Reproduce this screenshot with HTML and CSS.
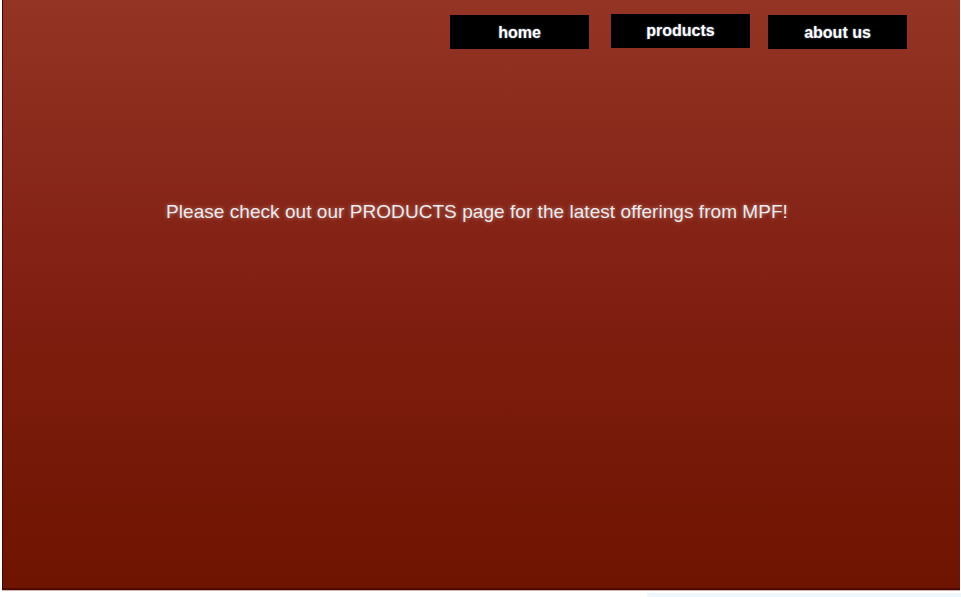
FILE: index.html
```html
<!DOCTYPE html>
<html lang="en">
<head>
    <meta charset="UTF-8">
    <title>MPF</title>
    <link rel="stylesheet" href="styles.css">
</head>
<body>
    <div class="page">
        <div class="nav">
            <a class="nav-btn" href="#">home</a>
            <a class="nav-btn nav-up" href="#">products</a>
            <a class="nav-btn" href="#">about us</a>
        </div>
        <p class="message">Please check out our PRODUCTS page for the latest offerings from MPF!</p>
    </div>
    <div class="footer-strip"></div>
</body>
</html>
```

FILE: styles.css
```css
body {
    margin: 0;
    background: #fff;
    font-family: "Liberation Sans", Arial, sans-serif;
}

/* Main panel */
.page {
    margin-left: 2px;
    width: 957px;
    height: 588px;
    background: linear-gradient(to bottom, #933425 0%, #801f12 50%, #6f1400 100%);
    border-left: 1px solid #3a0a04;
    border-bottom: 2px solid #4a0a00;
    box-shadow: 0 1px 0 #d8b0a8;
    display: flex;
    flex-direction: column;
}

.nav {
    display: flex;
    align-items: flex-start;
    gap: 22px;
    padding: 15px 0 0 447px;
}

.nav-btn {
    width: 139px;
    height: 34px;
    line-height: 35px;
    background: #000;
    color: #fff;
    text-align: center;
    font-size: 16px;
    font-weight: bold;
    text-decoration: none;
    text-shadow: 0 0 2px rgba(200, 220, 255, 0.6);
}

.nav-up {
    margin-top: -1px;
    margin-right: -4px;
    line-height: 34px;
}

.message {
    margin: 152px 0 0;
    text-align: center;
    padding-right: 9px;
    font-size: 19px;
    letter-spacing: 0.05px;
    color: #ebebf0;
    text-shadow: 0 0 4px rgba(235, 200, 190, 0.55);
}

.footer-strip {
    margin: 3px 0 0 647px;
    height: 4px;
    background: #eef8fc;
}
```
